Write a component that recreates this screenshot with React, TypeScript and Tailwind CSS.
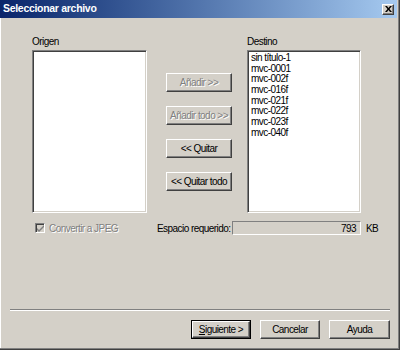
const destItems = ['sin título-1', 'mvc-0001', 'mvc-002f', 'mvc-016f', 'mvc-021f', 'mvc-022f', 'mvc-023f', 'mvc-040f'];

const raised =
  'border border-t-white border-l-white border-r-[#404040] border-b-[#404040] shadow-[inset_-1px_-1px_0_#808080] bg-[#d4d0c8]';
const sunken =
  'border border-t-[#808080] border-l-[#808080] border-r-white border-b-white shadow-[inset_1px_1px_0_#404040,inset_-1px_-1px_0_#d4d0c8]';

const Button = ({ label, disabled }: { label: string; disabled?: boolean }) => (
  <div
    className={`${raised} w-[66px] h-[19px] flex items-center justify-center whitespace-nowrap ${
      disabled ? 'text-[#808080] [text-shadow:1px_1px_0_#ffffff]' : 'text-black'
    }`}
  >
    {label}
  </div>
);

export default function App() {
  return (
    <div className="w-[400px] h-[350px] bg-[#d4d0c8] flex flex-col font-['Liberation_Sans',Arial,sans-serif] text-[10px] tracking-[-0.55px] text-black shadow-[inset_-1px_-1px_0_#404040,inset_-2px_-2px_0_#808080,inset_1px_0_0_#ffffff] overflow-hidden">
      {/* title bar */}
      <div className="w-[397px] h-[18px] flex items-center justify-between pl-[3px] pr-[3px] bg-gradient-to-r from-[#0a246a] to-[#a6caf0]">
        <span className="text-white font-bold text-[10.5px] tracking-[-0.3px]">Seleccionar archivo</span>
        <div className={`${raised} w-[12px] h-[11px] flex items-center justify-center`}>
          <svg width="7" height="6" viewBox="0 0 7 6">
            <path d="M0 0h2l1.5 2L5 0h2L4.5 3 7 6H5L3.5 4 2 6H0l2.5-3z" fill="#000" />
          </svg>
        </div>
      </div>

      {/* lists */}
      <div className="flex pt-[17px] pl-[32px]">
        <div className="w-[115px]">
          <div className="h-[15px] leading-[13px]">Origen</div>
          <div className={`${sunken} h-[163px] bg-white`} />
        </div>
        <div className="w-[100px] pt-[38px] pl-[19px] flex flex-col gap-[14px]">
          <Button label="Añadir >>" disabled />
          <Button label="Añadir todo >>" disabled />
          <Button label="<< Quitar" />
          <Button label="<< Quitar todo" />
        </div>
        <div className="w-[114px]">
          <div className="h-[15px] leading-[13px]">Destino</div>
          <div className={`${sunken} h-[163px] bg-white pt-[2px] pl-[3px]`}>
            {destItems.map((item) => (
              <div key={item} className="leading-[10.7px] h-[10.7px] whitespace-nowrap">
                {item}
              </div>
            ))}
          </div>
        </div>
      </div>

      {/* options row */}
      <div className="flex items-center h-[14px] mt-[8px] whitespace-nowrap">
        <div className="w-[157px] pl-[35px] flex items-center">
          <div className={`${sunken} w-[10px] h-[10px] bg-[#d4d0c8] flex items-center justify-center`}>
            <svg width="7" height="7" viewBox="0 0 7 7">
              <path d="M0 3l2 2 5-5v2L2 7 0 5z" fill="#808080" />
            </svg>
          </div>
          <span className="ml-[4px] text-[#808080] [text-shadow:1px_1px_0_#ffffff]">Convertir a JPEG</span>
        </div>
        <div className="w-[75px]">Espacio requerido:</div>
        <div className="w-[129px] h-[14px] border border-t-[#808080] border-l-[#808080] border-r-white border-b-white flex items-center justify-end pr-[4px]">
          793
        </div>
        <div className="ml-[5px]">KB</div>
      </div>

      {/* separator */}
      <div className="mt-[74px] mx-[10px] h-[2px] border-t border-t-[#808080] border-b border-b-white" />

      {/* dialog buttons */}
      <div className="flex justify-end gap-[9px] pr-[10px] mt-[9px]">
        <div className="w-[60px] h-[19px] border border-black">
          <div className={`${raised} w-full h-full flex items-center justify-center`}>
            <span>
              <span className="underline">S</span>iguiente &gt;
            </span>
          </div>
        </div>
        <div className={`${raised} w-[60px] h-[19px] flex items-center justify-center`}>Cancelar</div>
        <div className={`${raised} w-[61px] h-[19px] flex items-center justify-center`}>Ayuda</div>
      </div>
    </div>
  );
}
